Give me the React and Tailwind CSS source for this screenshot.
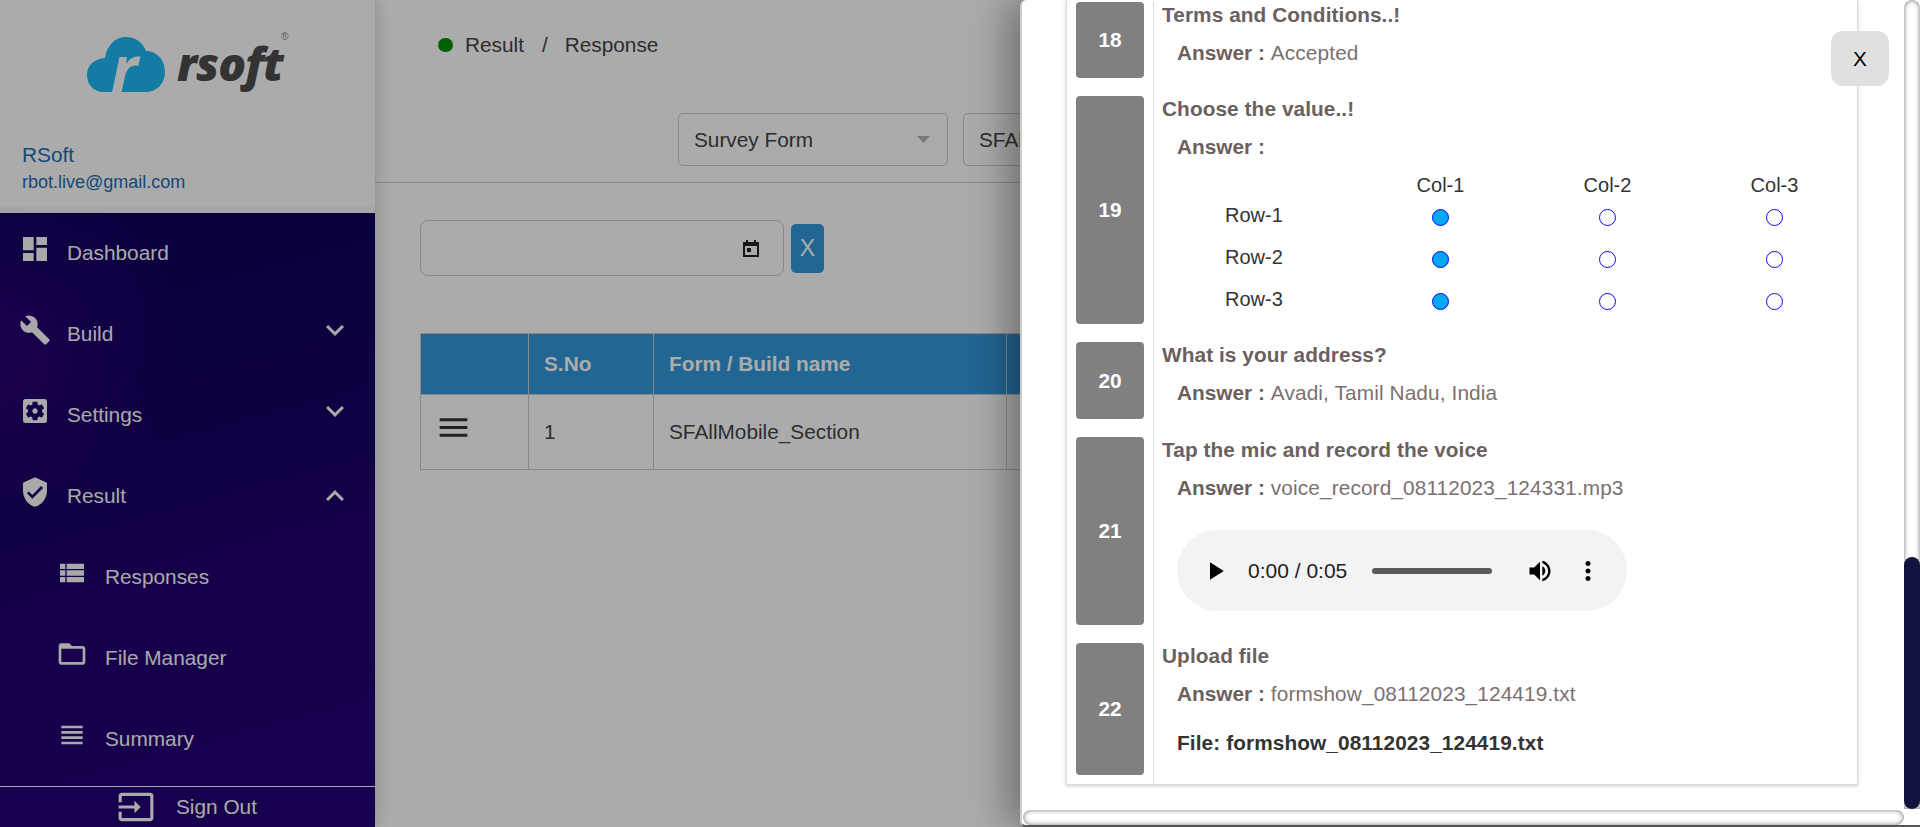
import React from 'react';
import {
  MdDashboard, MdBuild, MdSettingsApplications, MdVerifiedUser, MdViewList, MdFolderOpen,
  MdViewHeadline, MdInput, MdKeyboardArrowDown, MdKeyboardArrowUp, MdMenu, MdPlayArrow,
  MdVolumeUp, MdMoreVert,
} from 'react-icons/md';

const navItems = [
  { label: 'Dashboard', icon: MdDashboard },
  { label: 'Build', icon: MdBuild, arrow: 'down' },
  { label: 'Settings', icon: MdSettingsApplications, arrow: 'down' },
  { label: 'Result', icon: MdVerifiedUser, arrow: 'up' },
  { label: 'Responses', icon: MdViewList, sub: true },
  { label: 'File Manager', icon: MdFolderOpen, sub: true },
  { label: 'Summary', icon: MdViewHeadline, sub: true },
];

const Logo = () => (
  <div className="flex h-[207px] flex-col">
    <div className="ml-[87px] mt-[36px] flex items-start">
      <svg width="78" height="57" viewBox="0 0 78 57" className="shrink-0 overflow-visible">
        <path
          d="M17 56C7 56 0 49 0 39C0 29 7 23 18 22C20 9 28 1 39 1C49 1 56 7 59 15C70 15 78 24 78 36C78 47 70 56 59 56Z"
          fill="#1fb9f5"
        />
        <text x="24" y="56" fontFamily="'Open Sans', sans-serif" fontWeight="700" fontStyle="italic" fontSize="64" fill="#ffffff">r</text>
      </svg>
      <span className="ml-[12px] mt-[-5px] font-['Open_Sans',sans-serif] text-[46px] font-extrabold italic leading-[64px] tracking-[-1px] text-[#4d4d4d]">rsoft</span>
      <span className="ml-[-2px] mt-[-5px] text-[10px] leading-[12px] text-[#888]">®</span>
    </div>
    <div className="ml-[22px] mt-[48px] text-[20.8px] leading-[24px] text-[#1d6cb5]">RSoft</div>
    <div className="ml-[22px] mt-[3px] text-[18px] leading-[24px] text-[#1d6cb5]">rbot.live@gmail.com</div>
  </div>
);

const Sidebar = () => (
  <aside className="relative z-10 flex h-full w-[375px] shrink-0 flex-col bg-white shadow-[2px_0_12px_rgba(0,0,0,0.18)]">
    <Logo />
    <div className="h-[6px] bg-[#f7f7f7]" />
    <nav className="flex flex-1 flex-col bg-[radial-gradient(circle_at_0%_22%,rgba(60,0,130,0.55),transparent_30%),linear-gradient(165deg,#0d005f_0%,#14005f_30%,#22006f_60%,#230076_100%)] text-[20.8px] text-[#fdfdfd]">
      <div className="mt-[-1px] flex-1">
        {navItems.map((item) => {
          const Icon = item.icon;
          return (
            <div key={item.label} className={`flex h-[81px] items-center ${item.sub ? 'pl-[56px]' : 'pl-[19px]'}`}>
              <Icon size={32} className="mt-[-7px] shrink-0" />
              <span className={item.sub ? 'ml-[17px]' : 'ml-[16px]'}>{item.label}</span>
              {item.arrow === 'down' && <MdKeyboardArrowDown size={36} className="ml-auto mr-[22px] mt-[-7px]" />}
              {item.arrow === 'up' && <MdKeyboardArrowUp size={36} className="ml-auto mr-[22px]" />}
            </div>
          );
        })}
      </div>
      <div className="flex h-[41px] items-center border-t border-white pl-[117px]">
        <MdInput size={38} className="shrink-0" />
        <span className="ml-[21px]">Sign Out</span>
      </div>
    </nav>
  </aside>
);

const SelectBox = ({ label, width }) => (
  <div className={`flex h-[53px] shrink-0 items-center rounded-[5px] border border-[#ccc] pl-[15px] pr-[17px] text-[20.8px] text-[#444] ${width}`}>
    <span>{label}</span>
    <svg width="13" height="7" viewBox="0 0 13 7" className="ml-auto">
      <path d="M0 0H13L6.5 7Z" fill="#b5b5b5" />
    </svg>
  </div>
);

const MainArea = () => (
  <main className="min-w-0 flex-1 bg-white">
    <header className="h-[183px] border-b border-[#ccc] pt-[33px]">
      <div className="flex h-[24px] items-center pl-[63px] text-[20.8px] text-[#444]">
        <span className="h-[14px] w-[15px] rounded-full bg-[#009000]" />
        <span className="ml-[12px]">Result</span>
        <span className="ml-[18px]">/</span>
        <span className="ml-[17px]">Response</span>
      </div>
      <div className="ml-[303px] mt-[56px] flex gap-[15px]">
        <SelectBox label="Survey Form" width="w-[270px]" />
        <SelectBox label="SFAllMobile_Section" width="w-[270px]" />
      </div>
    </header>
    <div className="pl-[45px] pt-[37px]">
      <div className="flex items-center gap-[7px]">
        <div className="flex h-[56px] w-[364px] items-center justify-end rounded-[8px] border border-[#ccc] pr-[24px]">
          <svg width="16" height="17" viewBox="0 0 16 17">
            <path d="M3 0H5V2H11V0H13V2H16V17H0V2H3ZM2 6V15H14V6Z" fill="#222" />
            <rect x="4" y="8" width="4" height="4" fill="#222" />
          </svg>
        </div>
        <div className="flex h-[49px] w-[33px] items-center justify-center rounded-[5px] bg-[#3498db] text-[23px] text-white">X</div>
      </div>
      <table className="mt-[57px] w-[1460px] table-fixed border-collapse text-[20.8px] text-[#444]">
        <thead>
          <tr className="h-[61px] bg-[#3498db] text-left font-bold text-white">
            <th className="w-[108px] border border-[#ccc]" />
            <th className="w-[125px] border border-[#ccc] pl-[15px]">S.No</th>
            <th className="w-[353px] border border-[#ccc] pl-[15px]">Form / Build name</th>
            <th className="border border-[#ccc]" />
          </tr>
        </thead>
        <tbody>
          <tr className="h-[75px]">
            <td className="border border-[#ccc] pl-[14px]"><MdMenu size={37} className="mt-[-9px] text-[#333]" /></td>
            <td className="border border-[#ccc] pl-[15px]">1</td>
            <td className="border border-[#ccc] pl-[15px]">SFAllMobile_Section</td>
            <td className="border border-[#ccc]" />
          </tr>
        </tbody>
      </table>
    </div>
  </main>
);

const Answer = ({ children }) => (
  <div className="ml-[15px] mt-[14px] h-[24px] text-[20.8px] leading-[24px] tracking-[0.12px] text-[#7c7070]">
    <span className="mr-[6px] font-bold tracking-normal text-[#6b5f5f]">Answer :</span>
    {children}
  </div>
);

const Row = ({ no, height, title, cellPad = 'pb-[18px]', children }) => (
  <div className={`flex ${height}`}>
    <div className={`h-full w-[86px] shrink-0 pl-[9px] pr-[9px] ${cellPad}`}>
      <div className="flex h-full items-center justify-center rounded-[4px] bg-[#808080] text-[20.8px] font-bold text-white">{no}</div>
    </div>
    <div className="flex-1 border-l border-[#ddd] pl-[8px] pt-[1px]">
      <div className="h-[24px] text-[20.8px] font-bold leading-[24px] tracking-[0.08px] text-[#6b5f5f]">{title}</div>
      {children}
    </div>
  </div>
);

const Radio = ({ on }) => (
  <span className={`mt-[5px] size-[17px] rounded-full border-[1.5px] border-[#0a0af0] ${on ? 'bg-[#00a8f3]' : 'bg-white'}`} />
);

const RadioGrid = () => (
  <div className="ml-[15px] mt-[13px] grid grid-cols-[180px_167px_167px_167px] text-[20px] text-[#333]">
    <span className="h-[22px]" />
    {['Col-1', 'Col-2', 'Col-3'].map((c) => (
      <span key={c} className="h-[22px] text-center leading-[26px]">{c}</span>
    ))}
    {['Row-1', 'Row-2', 'Row-3'].map((r) => (
      <React.Fragment key={r}>
        <span className="flex h-[42px] items-center pl-[48px]">{r}</span>
        <span className="flex h-[42px] items-center justify-center"><Radio on /></span>
        <span className="flex h-[42px] items-center justify-center"><Radio /></span>
        <span className="flex h-[42px] items-center justify-center"><Radio /></span>
      </React.Fragment>
    ))}
  </div>
);

const AudioBar = () => (
  <div className="ml-[15px] mt-[30px] flex h-[81px] w-[450px] items-center rounded-full bg-[#f1f3f4] pl-[23px] text-[21px] text-[#222]">
    <MdPlayArrow size={30} className="text-black" />
    <span className="ml-[18px] w-[100px] whitespace-nowrap">0:00 / 0:05</span>
    <span className="ml-[24px] h-[6px] w-[120px] rounded-full bg-[#5a5a5a]" />
    <MdVolumeUp size={28} className="ml-[34px] text-black" />
    <MdMoreVert size={30} className="ml-[19px] text-black" />
  </div>
);

const Drawer = () => (
  <aside className="absolute right-0 top-0 z-30 flex h-screen w-[900px] flex-col rounded-l-[6px] border-b-2 border-l-2 border-b-[#555] border-l-[#ccc] bg-white shadow-[-14px_0_36px_rgba(0,0,0,0.32)]">
    <div className="flex min-h-0 flex-1">
      <div className="min-w-0 flex-1 pl-[44px]">
        <div className="flex h-[785px] w-[792px] flex-col border-x border-b border-[#ddd] pt-[2px] shadow-[0_1px_4px_rgba(0,0,0,0.2)]">
          <Row no="18" height="h-[94px]" title="Terms and Conditions..!">
            <Answer>Accepted</Answer>
          </Row>
          <Row no="19" height="h-[246px]" title="Choose the value..!">
            <Answer />
            <RadioGrid />
          </Row>
          <Row no="20" height="h-[95px]" title="What is your address?">
            <Answer>Avadi, Tamil Nadu, India</Answer>
          </Row>
          <Row no="21" height="h-[206px]" title="Tap the mic and record the voice">
            <Answer>voice_record_08112023_124331.mp3</Answer>
            <AudioBar />
          </Row>
          <Row no="22" height="flex-1" title="Upload file" cellPad="pb-[9px]">
            <Answer>formshow_08112023_124419.txt</Answer>
            <div className="ml-[15px] mt-[25px] text-[20.8px] font-bold leading-[24px] tracking-[0.1px] text-[#333]">File: formshow_08112023_124419.txt</div>
          </Row>
        </div>
      </div>
      <div className="flex w-[16px] shrink-0 flex-col justify-end rounded-t-full shadow-[inset_0_0_5px_rgba(0,0,0,0.55)]">
        <div className="h-[252px] rounded-full bg-[#12123f]" />
      </div>
    </div>
    <div className="ml-[1px] mr-[16px] mt-[1px] h-[15px] rounded-full shadow-[inset_0_0_5px_rgba(0,0,0,0.55)]" />
    <button className="absolute right-[31px] top-[31px] flex h-[55px] w-[58px] items-center justify-center rounded-[12px] bg-[#e0e0e0] text-[20.8px] text-black">X</button>
  </aside>
);

export default function App() {
  return (
    <div className="relative flex h-screen overflow-hidden font-['Liberation_Sans',Arial,sans-serif]">
      <Sidebar />
      <MainArea />
      <div className="absolute inset-0 z-20 bg-black/33" />
      <Drawer />
    </div>
  );
}
